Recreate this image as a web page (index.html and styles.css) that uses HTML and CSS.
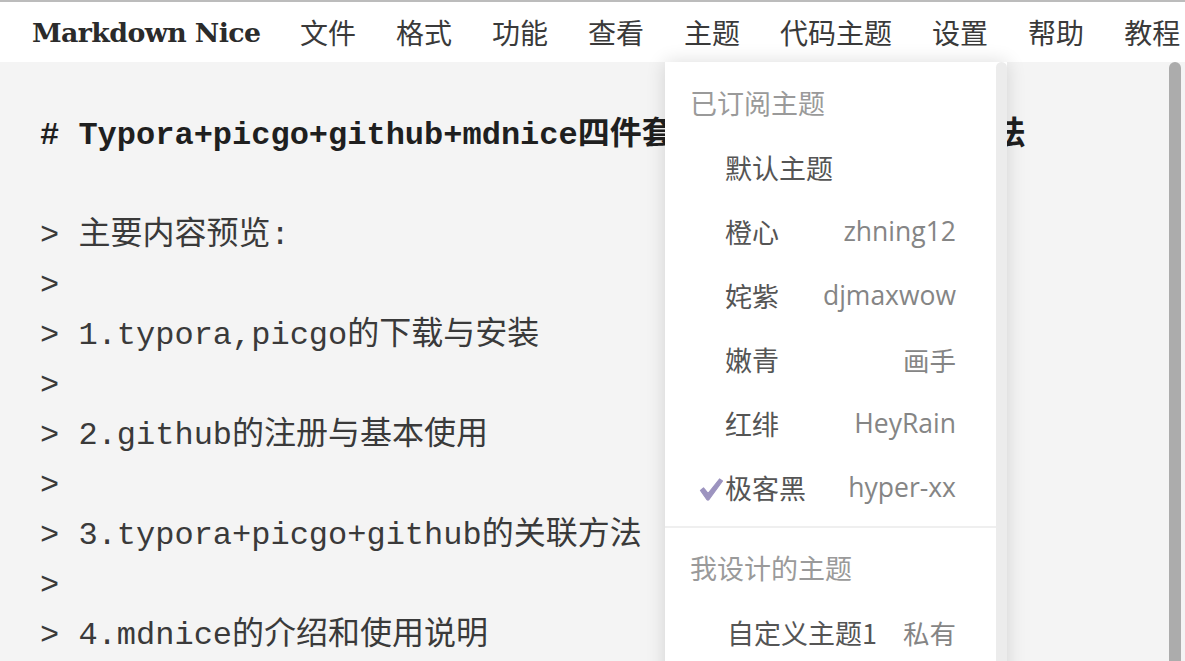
FILE: index.html
```html
<!DOCTYPE html>
<html lang="zh">
<head>
<meta charset="utf-8">
<title>Markdown Nice</title>
<link rel="stylesheet" href="styles.css">
</head>
<body>
<div class="app">
  <header class="navbar">
    <div class="logo">Markdown Nice</div>
    <nav class="menu">
      <span class="menu-item">文件</span>
      <span class="menu-item">格式</span>
      <span class="menu-item">功能</span>
      <span class="menu-item">查看</span>
      <span class="menu-item">主题</span>
      <span class="menu-item">代码主题</span>
      <span class="menu-item">设置</span>
      <span class="menu-item">帮助</span>
      <span class="menu-item">教程</span>
    </nav>
  </header>
  <main class="workspace">
    <div class="editor">
      <div class="line heading"># Typora+picgo+github+mdnice四件套下载安装与组合使用方法</div>
      <div class="line">&nbsp;</div>
      <div class="line">&gt; 主要内容预览:</div>
      <div class="line">&gt;</div>
      <div class="line">&gt; 1.typora,picgo的下载与安装</div>
      <div class="line">&gt;</div>
      <div class="line">&gt; 2.github的注册与基本使用</div>
      <div class="line">&gt;</div>
      <div class="line">&gt; 3.typora+picgo+github的关联方法</div>
      <div class="line">&gt;</div>
      <div class="line">&gt; 4.mdnice的介绍和使用说明</div>
    </div>
    <div class="scroll-track"><div class="scroll-thumb"></div></div>
  </main>
  <div class="dropdown">
    <div class="dropdown-list">
      <div class="group-title">已订阅主题</div>
      <div class="item"><span class="name">默认主题</span></div>
      <div class="item"><span class="name">橙心</span><span class="author">zhning12</span></div>
      <div class="item"><span class="name">姹紫</span><span class="author">djmaxwow</span></div>
      <div class="item"><span class="name">嫩青</span><span class="author">画手</span></div>
      <div class="item"><span class="name">红绯</span><span class="author">HeyRain</span></div>
      <div class="item active">
        <svg class="check" viewBox="0 0 26 24" width="26" height="24"><path d="M2.5 13.5 L5.5 11 L10 16.5 L21.5 2 L24.5 4 L11 22.5 Q10 23.5 8.8 22.5 Z" fill="#9c93bf" stroke="#9c93bf" stroke-width="1.2" stroke-linejoin="round"/></svg>
        <span class="name">极客黑</span><span class="author">hyper-xx</span>
      </div>
      <div class="divider"></div>
      <div class="group-title">我设计的主题</div>
      <div class="item custom"><span class="name">自定义主题1</span><span class="author">私有</span></div>
    </div>
    <div class="dropdown-scroll"></div>
  </div>
</div>
</body>
</html>
```

FILE: styles.css
```css
* { box-sizing: border-box; }
html, body { margin: 0; padding: 0; height: 100%; overflow: hidden; }
body { background: #f4f4f4; font-family: "Open Sans", "Noto Sans CJK SC", sans-serif; }

.app { position: relative; height: 100vh; display: flex; flex-direction: column; }

.navbar {
  height: 62px;
  border-top: 2px solid #bcbcbc;
  background: #fff;
  display: flex;
  align-items: center;
  padding-left: 32px;
  flex: none;
  overflow: hidden;
  white-space: nowrap;
}
.logo {
  font-family: "DejaVu Serif", "Liberation Serif", serif;
  font-weight: bold;
  font-size: 26.8px;
  color: #2b2b2b;
  letter-spacing: -0.6px;
  width: 228px;
  flex: none;
  margin-right: 20px;
  white-space: nowrap;
}
.menu { display: flex; flex: none; }
.menu-item {
  flex: none;
  font-family: "Noto Sans CJK SC", sans-serif;
  font-size: 28px;
  color: #3a3a3a;
  padding: 0 20px;
  line-height: 60px;
  white-space: nowrap;
}

.workspace { flex: 1; display: flex; background: #f4f4f4; min-height: 0; }
.editor {
  flex: 1;
  padding: 49px 0 0 40px;
  font-family: "Liberation Mono", "Noto Sans CJK SC", monospace;
  font-size: 32px;
  color: #3a3a3a;
  white-space: nowrap;
  overflow: hidden;
}
.line { line-height: 50px; height: 50px; }
.heading { font-weight: bold; color: #1f1f1f; }

.scroll-track { width: 16px; flex: none; padding-right: 4px; }
.scroll-thumb { width: 12px; height: 100%; background: #acacac; border-radius: 6px 6px 0 0; }

.dropdown {
  position: absolute;
  left: 665px;
  top: 62px;
  width: 342px;
  bottom: -40px;
  background: #fff;
  box-shadow: 0 0 18px rgba(0, 0, 0, 0.14);
  display: flex;
  z-index: 5;
}
.dropdown-list { flex: 1; padding-top: 9px; }
.dropdown-scroll {
  width: 11px;
  flex: none;
  background: #ececec;
  border-radius: 6px 6px 0 0;
}
.group-title {
  font-family: "Noto Sans CJK SC", sans-serif;
  font-size: 27px;
  color: #9a9a9a;
  line-height: 64px;
  padding-left: 25px;
}
.item {
  position: relative;
  display: flex;
  justify-content: space-between;
  align-items: center;
  height: 64px;
  padding: 0 40px 0 60px;
  font-size: 27px;
}
.name { font-family: "Noto Sans CJK SC", sans-serif; color: #555; }
.author { font-family: "Open Sans", "Noto Sans CJK SC", sans-serif; color: #858585; font-size: 26.5px; }
.check { position: absolute; left: 33px; top: 22px; }
.item.custom { padding-left: 62px; }
.divider { height: 2px; background: #efefef; margin: 7px 0 8px; }
```
